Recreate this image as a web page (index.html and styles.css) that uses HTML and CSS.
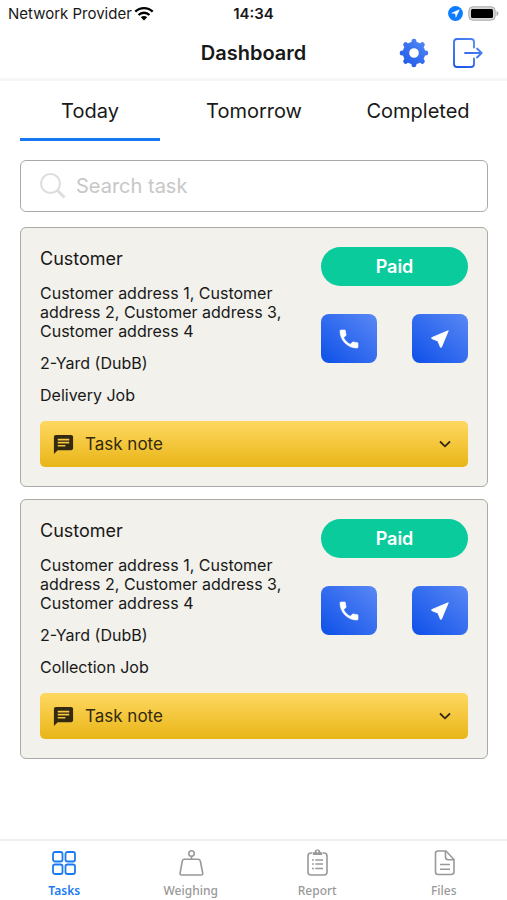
FILE: index.html
```html
<!DOCTYPE html>
<html lang="en">
<head>
<meta charset="utf-8">
<meta name="viewport" content="width=device-width, initial-scale=1">
<title>Dashboard</title>
<link rel="stylesheet" href="styles.css">
</head>
<body>
<svg class="sprite" aria-hidden="true">
  <defs>
    <linearGradient id="blue" gradientUnits="userSpaceOnUse" x1="24" y1="4" x2="6" y2="28">
      <stop offset="0" stop-color="#4f85f5"/><stop offset="1" stop-color="#1f5ae6"/>
    </linearGradient>
  </defs>
  <symbol id="phone" viewBox="0 0 24 24"><path fill="currentColor" d="M20 15.500c-1.250 0-2.450-.2-3.570-.57-.35-.11-.74-.03-1.020.24l-2.200 2.200c-2.830-1.440-5.150-3.750-6.590-6.590l2.200-2.210c.28-.26.36-.65.25-1C8.700 6.450 8.500 5.250 8.500 4c0-.55-.45-1-1-1H4c-.55 0-1 .45-1 1 0 9.390 7.610 17 17 17 .55 0 1-.45 1-1v-3.500c0-.55-.45-1-1-1z" stroke="currentColor" stroke-width=".6"/></symbol>
  <symbol id="navigate" viewBox="0 0 24 24"><path fill="currentColor" stroke="currentColor" stroke-linejoin="round" d="M21 3 3 10.500v1l6.800 2.700L12.500 21h1z"/></symbol>
  <symbol id="note" viewBox="0 0 24 24"><path fill="currentColor" d="M20 2H4c-1.100 0-2 .9-2 2v18l4-4h14c1.100 0 2-.9 2-2V4c0-1.100-.9-2-2-2zM6 6h12v1.800H6zm0 3.200h12V11H6zm0 3.200h8v1.800H6z"/></symbol>
  <symbol id="chevron" viewBox="0 0 12 12"><path fill="none" stroke="currentColor" stroke-width="1.800" d="m1 3.500 5 4.800 5-4.800"/></symbol>
</svg>

<div class="app">
  <div class="status">
    <span class="status-side">Network Provider
      <svg width="20" height="15" viewBox="0 0 20 15" aria-hidden="true"><g fill="none" stroke="#000" stroke-width="2.400"><path d="M1.300 5.600a12.500 12.500 0 0 1 17.400 0"/><path d="M4.500 9a8 8 0 0 1 11 0"/></g><path d="M6.800 11.300a4.600 4.600 0 0 1 6.400 0L10 14.500z"/></svg>
    </span>
    <span class="status-time">14:34</span>
    <span class="status-side status-end">
      <svg width="15" height="15" viewBox="0 0 15 15" aria-hidden="true"><circle cx="7.500" cy="7.500" r="7.400" fill="#0a7cff"/><path fill="#fff" d="M11.800 3.200 2.900 7.300l4.300.5.600 4.300z"/></svg>
      <svg width="31" height="15" viewBox="0 0 31 15" aria-hidden="true"><rect x=".8" y=".8" width="26.400" height="13.400" rx="4" fill="#d8d8d8" stroke="#aaa" stroke-width="1"/><rect x="3" y="3" width="22" height="9" rx="1.500"/><path fill="#aaa" d="M28.500 5c2.600 1 2.600 4 0 5z"/></svg>
    </span>
  </div>

  <header class="header">
    <h1>Dashboard</h1>
    <div class="actions">
      <button type="button" aria-label="Settings">
        <svg width="30" height="30" viewBox="0 0 30 30"><g fill="none" stroke="url(#blue)"><circle cx="15" cy="15" r="8" stroke-width="6.400"/></g>
          <g stroke="url(#blue)" stroke-width="5" stroke-linecap="round"><path d="M15 3.200 15.010 6M15 26.800 15.010 24M3.200 15 6 15.010M26.800 15 24 15.010M6.700 6.700l2 2M23.300 23.300l-2-2M23.300 6.700l-2 2M6.700 23.300l2-2"/></g></svg>
      </button>
      <button type="button" aria-label="Log out">
        <svg width="30" height="30" viewBox="0 0 30 30" fill="none" stroke="url(#blue)" stroke-width="1.800" stroke-linecap="round" stroke-linejoin="round"><path d="M21 9.500V4q0-3-3-3H4Q1 1 1 4v22q0 3 3 3h14q3 0 3-3v-5.500"/><path d="M12 15.010 28.500 15M24 10.500l4.700 4.500-4.700 4.500"/></svg>
      </button>
    </div>
  </header>

  <main>
    <div class="tabs" role="tablist">
      <button type="button" role="tab" aria-selected="true">Today</button>
      <button type="button" role="tab" aria-selected="false">Tomorrow</button>
      <button type="button" role="tab" aria-selected="false">Completed</button>
    </div>

    <label class="search">
      <svg width="26" height="26" viewBox="0 0 26 26" fill="none" stroke="#ddd" aria-hidden="true"><circle cx="10.500" cy="10.500" r="9.500" stroke-width="2"/><path stroke-width="3" d="m17.500 17.500 7 7"/></svg>
      <input type="search" placeholder="Search task" aria-label="Search task">
    </label>

    <article class="card">
      <div class="card-top">
        <div class="info">
          <h2>Customer</h2>
          <p>Customer address 1, Customer address 2, Customer address 3, Customer address 4</p>
          <p>2-Yard (DubB)</p>
          <p>Delivery Job</p>
        </div>
        <div class="side">
          <span class="paid">Paid</span>
          <div class="contact">
            <button type="button" aria-label="Call"><svg width="24" height="24"><use href="#phone"/></svg></button>
            <button type="button" aria-label="Navigate"><svg width="22" height="22"><use href="#navigate"/></svg></button>
          </div>
        </div>
      </div>
      <button type="button" class="task-note" aria-expanded="false">
        <svg width="23" height="23"><use href="#note"/></svg><span>Task note</span><svg width="12" height="12"><use href="#chevron"/></svg>
      </button>
    </article>

    <article class="card">
      <div class="card-top">
        <div class="info">
          <h2>Customer</h2>
          <p>Customer address 1, Customer address 2, Customer address 3, Customer address 4</p>
          <p>2-Yard (DubB)</p>
          <p>Collection Job</p>
        </div>
        <div class="side">
          <span class="paid">Paid</span>
          <div class="contact">
            <button type="button" aria-label="Call"><svg width="24" height="24"><use href="#phone"/></svg></button>
            <button type="button" aria-label="Navigate"><svg width="22" height="22"><use href="#navigate"/></svg></button>
          </div>
        </div>
      </div>
      <button type="button" class="task-note" aria-expanded="false">
        <svg width="23" height="23"><use href="#note"/></svg><span>Task note</span><svg width="12" height="12"><use href="#chevron"/></svg>
      </button>
    </article>
  </main>

  <nav class="bottom" aria-label="Main">
    <a href="#tasks" aria-current="page">
      <svg width="28" height="28" viewBox="0 0 28 28" fill="none" stroke="currentColor" stroke-width="1.800"><rect x="3" y="3" width="9.500" height="9.500" rx="2"/><rect x="15.500" y="3" width="9.500" height="9.500" rx="2"/><rect x="3" y="15.500" width="9.500" height="9.500" rx="2"/><rect x="15.500" y="15.500" width="9.500" height="9.500" rx="2"/></svg>
      Tasks
    </a>
    <a href="#weighing">
      <svg width="28" height="28" viewBox="0 0 28 28" fill="none" stroke="currentColor" stroke-width="1.600" stroke-linejoin="round"><circle cx="14.500" cy="4.500" r="2.700"/><path d="M14.500 7.200V10M7.500 10.200h13.500q1.800 0 2.300 1.800l2.400 12q.4 2-1.600 2H4.700q-2 0-1.600-2L5.300 12q.4-1.800 2.200-1.800z"/></svg>
      Weighing
    </a>
    <a href="#report">
      <svg width="28" height="28" viewBox="0 0 28 28" fill="none" stroke="currentColor" stroke-width="1.600"><path d="M9.500 4H8Q5 4 5 7v16q0 3 3 3h13q3 0 3-3V7q0-3-3-3h-1.500"/><path fill="currentColor" stroke="none" d="M10 6V4.200q0-1.200 1.500-1.200Q12 .3 14.500.3T17.500 3Q19 3 19 4.200V6z"/><circle cx="14.500" cy="2.600" r="1" fill="#fff" stroke="none"/><path d="M9 11h1.800M12.300 11H20M9 15h1.800M12.300 15H20M9 19.500h1.800M12.300 19.500H20"/></svg>
      Report
    </a>
    <a href="#files">
      <svg width="28" height="28" viewBox="0 0 28 28" fill="none" stroke="currentColor" stroke-width="1.600" stroke-linejoin="round"><path d="M16 2H8Q5.500 2 5.500 4.500v18.500q0 2.500 2.500 2.500h13q3 0 3-2.500V10.500z"/><path d="M15.500 2v6q0 2.800 2.800 2.800H24M10 15.500h10M10 20.200h10"/></svg>
      Files
    </a>
  </nav>
</div>
</body>
</html>
```
FILE: styles.css
```css
* { box-sizing: border-box; }

body {
  margin: 0;
  background: #fff;
  color: #181818;
  font-family: Inter, "Liberation Sans", sans-serif;
}

button {
  margin: 0;
  padding: 0;
  border: 0;
  background: none;
  color: inherit;
  font: inherit;
  cursor: pointer;
}

svg { display: block; flex: none; }
.sprite { position: absolute; width: 0; height: 0; }

.app {
  display: flex;
  flex-direction: column;
  min-height: 100vh;
}

.status {
  display: grid;
  grid-template-columns: 1fr auto 1fr;
  align-items: center;
  height: 27px;
  padding: 0 8px;
  font-size: 15px;
}
.status-side { display: flex; align-items: center; gap: 2px; }
.status-end { justify-content: flex-end; gap: 5px; }
.status-time { font-weight: 600; }

.header {
  display: grid;
  grid-template-columns: 1fr auto 1fr;
  align-items: center;
  height: 54px;
  padding: 0 24px;
  border-bottom: 3px solid #f6f6f6;
}
.header h1 {
  grid-column: 2;
  margin: 0;
  font-size: 20px;
  font-weight: 600;
  line-height: 24px;
}
.actions { display: flex; justify-content: flex-end; gap: 24px; }

main { flex: 1; padding: 0 19px 20px 20px; }

.tabs {
  display: grid;
  grid-template-columns: repeat(3, 1fr);
  gap: 24px;
  margin-bottom: 19px;
}
.tabs button {
  height: 60px;
  padding-top: 3px;
  border-bottom: 3px solid transparent;
  font-size: 20px;
  white-space: nowrap;
}
.tabs [aria-selected="true"] { border-color: #1877f2; }

.search {
  display: flex;
  align-items: center;
  gap: 10px;
  height: 52px;
  padding: 0 19px;
  border: 1px solid #aaa;
  border-radius: 6px;
}
.search input {
  flex: 1;
  min-width: 0;
  padding: 0;
  border: 0;
  outline: 0;
  background: none;
  color: inherit;
  font: inherit;
  font-size: 20px;
}
.search input::placeholder { color: #c7c7c7; opacity: 1; }

.card {
  margin-top: 15px;
  padding: 19px;
  border: 1px solid #aaa;
  border-radius: 6px;
  background: #f2f1eb;
}
.card + .card { margin-top: 12px; }

.card-top { display: flex; gap: 24px; }
.info { flex: 1; min-width: 0; }
.info h2 {
  margin: 0;
  font-size: 18px;
  font-weight: 400;
  line-height: 24px;
}
.info p {
  margin: 13px 0 0;
  font-size: 16px;
  line-height: 19px;
}

.side { flex: 0 0 147px; }
.paid {
  display: block;
  border-radius: 20px;
  background: #0acb9b;
  color: #fff;
  font-size: 18px;
  font-weight: 600;
  line-height: 39px;
  text-align: center;
}
.contact {
  display: flex;
  justify-content: space-between;
  margin-top: 28px;
}
.contact button {
  display: flex;
  align-items: center;
  justify-content: center;
  width: 56px;
  height: 49px;
  border-radius: 8px;
  background: linear-gradient(to top right, #0d50e8, #5a88f5);
  color: #fff;
}

.task-note {
  display: flex;
  align-items: center;
  gap: 10px;
  width: 100%;
  height: 46px;
  margin-top: 16px;
  padding: 0 17px 0 12px;
  border-radius: 5px;
  background: linear-gradient(#ffd861, #e8b517);
  color: #33290f;
  font-size: 17px;
}
.task-note span { flex: 1; text-align: left; }

.bottom {
  display: grid;
  grid-template-columns: repeat(4, 1fr);
  height: 61px;
  padding-left: 1px;
  border-top: 2px solid #efefef;
}
.bottom a {
  display: flex;
  flex-direction: column;
  align-items: center;
  gap: 6px;
  padding-top: 8px;
  color: #999;
  font: 500 12px/16px "Noto Sans", sans-serif;
  text-decoration: none;
}
.bottom [aria-current] { color: #1b7bf2; font-weight: 600; }
```
